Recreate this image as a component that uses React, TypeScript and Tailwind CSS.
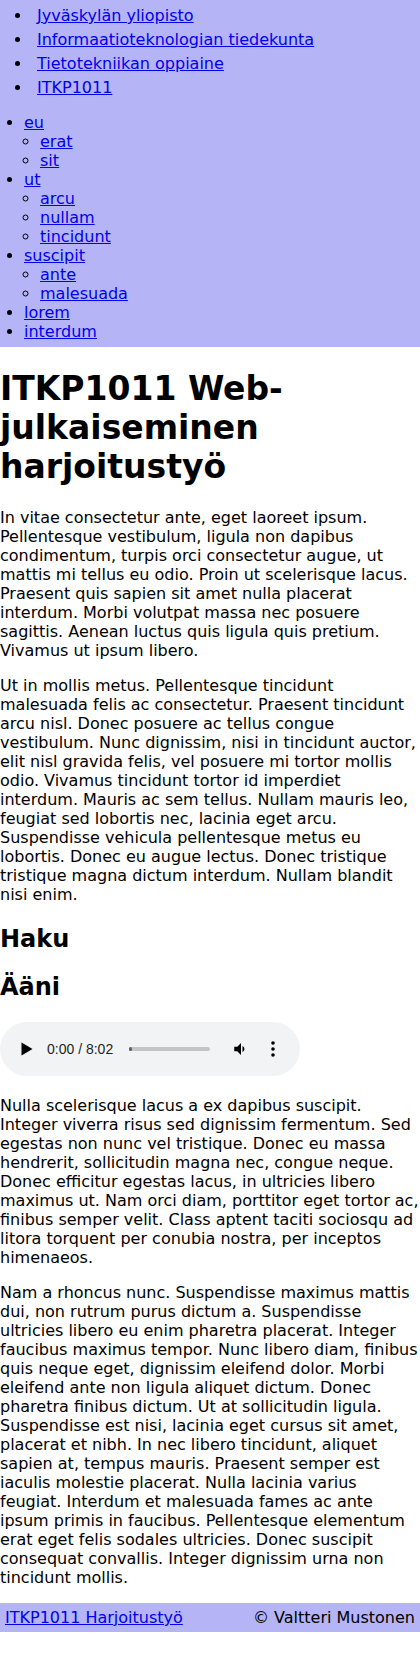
const crumbs = [
  'Jyväskylän yliopisto',
  'Informaatioteknologian tiedekunta',
  'Tietotekniikan oppiaine',
  'ITKP1011',
];

const menu: { name: string; sub: string[] }[] = [
  { name: 'eu', sub: ['erat', 'sit'] },
  { name: 'ut', sub: ['arcu', 'nullam', 'tincidunt'] },
  { name: 'suscipit', sub: ['ante', 'malesuada'] },
  { name: 'lorem', sub: [] },
  { name: 'interdum', sub: [] },
];

const p1 =
  'In vitae consectetur ante, eget laoreet ipsum. Pellentesque vestibulum, ligula non dapibus condimentum, turpis orci consectetur augue, ut mattis mi tellus eu odio. Proin ut scelerisque lacus. Praesent quis sapien sit amet nulla placerat interdum. Morbi volutpat massa nec posuere sagittis. Aenean luctus quis ligula quis pretium. Vivamus ut ipsum libero.';
const p2 =
  'Ut in mollis metus. Pellentesque tincidunt malesuada felis ac consectetur. Praesent tincidunt arcu nisl. Donec posuere ac tellus congue vestibulum. Nunc dignissim, nisi in tincidunt auctor, elit nisl gravida felis, vel posuere mi tortor mollis odio. Vivamus tincidunt tortor id imperdiet interdum. Mauris ac sem tellus. Nullam mauris leo, feugiat sed lobortis nec, lacinia eget arcu. Suspendisse vehicula pellentesque metus eu lobortis. Donec eu augue lectus. Donec tristique tristique magna dictum interdum. Nullam blandit nisi enim.';
const p3 =
  'Nulla scelerisque lacus a ex dapibus suscipit. Integer viverra risus sed dignissim fermentum. Sed egestas non nunc vel tristique. Donec eu massa hendrerit, sollicitudin magna nec, congue neque. Donec efficitur egestas lacus, in ultricies libero maximus ut. Nam orci diam, porttitor eget tortor ac, finibus semper velit. Class aptent taciti sociosqu ad litora torquent per conubia nostra, per inceptos himenaeos.';
const p4 =
  'Nam a rhoncus nunc. Suspendisse maximus mattis dui, non rutrum purus dictum a. Suspendisse ultricies libero eu enim pharetra placerat. Integer faucibus maximus tempor. Nunc libero diam, finibus quis neque eget, dignissim eleifend dolor. Morbi eleifend ante non ligula aliquet dictum. Donec pharetra finibus dictum. Ut at sollicitudin ligula. Suspendisse est nisi, lacinia eget cursus sit amet, placerat et nibh. In nec libero tincidunt, aliquet sapien at, tempus mauris. Praesent semper est iaculis molestie placerat. Nulla lacinia varius feugiat. Interdum et malesuada fames ac ante ipsum primis in faucibus. Pellentesque elementum erat eget felis sodales ultricies. Donec suscipit consequat convallis. Integer dignissim urna non tincidunt mollis.';

const link = 'text-[#0000ee] underline';

// looks like chrome's default <audio controls>
const AudioBar = () => (
  <div className="flex items-center w-[300px] h-[54px] rounded-[27px] bg-[#f1f3f4]">
    <svg width="12" height="14" viewBox="0 0 12 14" className="ml-[21px]">
      <path d="M0.5 0.5 L11.5 7 L0.5 13.5 Z" fill="#000" />
    </svg>
    <span className="ml-[14px] text-[14px] text-[#1f1f1f]" style={{ fontFamily: '"Liberation Sans", Arial, sans-serif' }}>
      0:00 / 8:02
    </span>
    <div className="relative ml-[16px] w-[81px] h-[4px] rounded-full bg-[#c4c5c6]">
      <div className="absolute left-0 top-0 h-[4px] w-[3px] rounded-full bg-[#5f6061]" />
    </div>
    <svg width="18" height="18" viewBox="0 0 24 24" className="ml-[22px]">
      <path d="M3 9v6h4l5 5V4L7 9H3z" fill="#000" />
      <path d="M16.5 12c0-1.77-1.02-3.29-2.5-4.03v8.05c1.48-.73 2.5-2.25 2.5-4.02z" fill="#000" />
    </svg>
    <svg width="4" height="16" viewBox="0 0 4 16" className="ml-[21px]">
      <circle cx="2" cy="2" r="1.8" fill="#000" />
      <circle cx="2" cy="8" r="1.8" fill="#000" />
      <circle cx="2" cy="14" r="1.8" fill="#000" />
    </svg>
  </div>
);

export default function App() {
  return (
    <div
      className="bg-white text-black text-[16px] leading-[normal]"
      style={{ fontFamily: '"DejaVu Sans", Verdana, sans-serif' }}
    >
      <nav className="bg-[#b4b4f6] pt-[4px] pb-[6px]">
        <ul className="list-disc pl-[32px] leading-6">
          {crumbs.map((c) => (
            <li key={c} className="pl-[5px]">
              <a href="#" className={link}>{c}</a>
            </li>
          ))}
        </ul>
        <ul className="list-disc pl-[24px] mt-[13px]">
          {menu.map((m) => (
            <li key={m.name}>
              <a href="#" className={link}>{m.name}</a>
              {m.sub.length > 0 && (
                <ul className="list-[circle] pl-[16px]">
                  {m.sub.map((s) => (
                    <li key={s}>
                      <a href="#" className={link}>{s}</a>
                    </li>
                  ))}
                </ul>
              )}
            </li>
          ))}
        </ul>
      </nav>

      <main>
        <h1 className="text-[33px] leading-[normal] font-bold my-[22px]">ITKP1011 Web-julkaiseminen harjoitustyö</h1>
        <p className="my-4">{p1}</p>
        <p className="my-4">{p2}</p>
        <h2 className="text-[24px] leading-[normal] font-bold mt-[21px] mb-[20px]">Haku</h2>
        <h2 className="text-[24px] leading-[normal] font-bold mt-[20px] mb-[21px]">Ääni</h2>
        <div className="mb-[20px]"><AudioBar /></div>
        <p className="my-4">{p3}</p>
        <p className="my-4">{p4}</p>
      </main>

      <footer className="bg-[#b4b4f6] flex justify-between px-[5px] py-[5px]">
        <a href="#" className={link}>ITKP1011 Harjoitustyö</a>
        <span>© Valtteri Mustonen</span>
      </footer>
    </div>
  );
}
